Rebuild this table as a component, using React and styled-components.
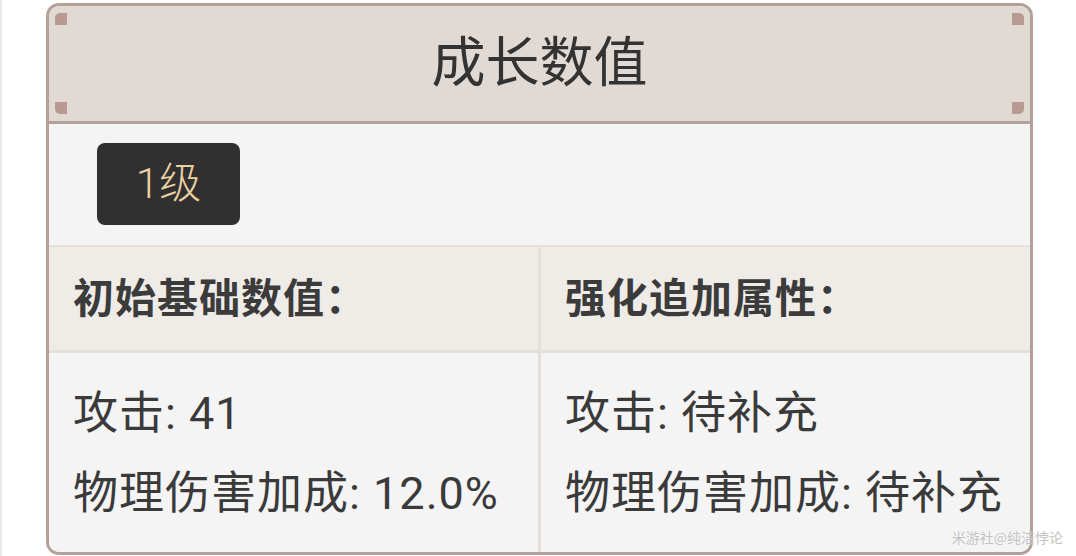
import React from "react";
import styled, { createGlobalStyle } from "styled-components";

const GlobalStyle = createGlobalStyle`
    html, body {
        margin: 0;
        padding: 0;
        background: #ffffff;
    }
    body {
        font-family: "Noto Sans CJK SC", "Noto Sans", sans-serif;
        border-left: 2px solid #e9e9e9;
    }
`;

const stats = {
    base: [
        ["攻击", "41"],
        ["物理伤害加成", "12.0%"],
    ],
    extra: [
        ["攻击", "待补充"],
        ["物理伤害加成", "待补充"],
    ],
};

const App = () => {
    return (
        <Page>
            <GlobalStyle />
            <Card>
                <TitleBar>
                    <Corner $v="top" $h="left" />
                    <Corner $v="top" $h="right" />
                    <Corner $v="bottom" $h="left" />
                    <Corner $v="bottom" $h="right" />
                    <Title>成长数值</Title>
                </TitleBar>
                <LevelRow>
                    <LevelBadge>1级</LevelBadge>
                </LevelRow>
                <Table>
                    <HeadCell>初始基础数值：</HeadCell>
                    <HeadCell>强化追加属性：</HeadCell>
                    <BodyCell>
                        {stats.base.map(([k, v]) => (
                            <StatLine key={k}>{k}: {v}</StatLine>
                        ))}
                    </BodyCell>
                    <BodyCell>
                        {stats.extra.map(([k, v]) => (
                            <StatLine key={k}>{k}: {v}</StatLine>
                        ))}
                    </BodyCell>
                </Table>
            </Card>
            <Watermark>米游社@纯洁悖论</Watermark>
        </Page>
    );
};

export default App;

const Page = styled.div`
    position: relative;
    width: 1074px;
    height: 556px;
    padding: 3px 0 0 44px;
    box-sizing: border-box;
`;

const Card = styled.div`
    width: 987px;
    height: 552px;
    box-sizing: border-box;
    border: 3px solid #b4a098;
    border-radius: 13px;
    overflow: hidden;
    background: #f4f4f4;
    display: flex;
    flex-direction: column;
`;

const TitleBar = styled.div`
    position: relative;
    height: 115px;
    flex-shrink: 0;
    box-sizing: content-box;
    background: #e1d9d3;
    border-bottom: 3px solid #b4a098;
    display: flex;
    align-items: center;
    justify-content: center;
`;

const Corner = styled.span`
    position: absolute;
    width: 12px;
    height: 12px;
    background: #b99a90;
    ${(p) => p.$v}: 7px;
    ${(p) => p.$h}: 6px;
    border-${(p) => p.$v}-${(p) => p.$h}-radius: 5px;
`;

const Title = styled.h1`
    margin: 0 0 10px;
    font-size: 54px;
    font-weight: 400;
    color: #333333;
    line-height: 1;
`;

const LevelRow = styled.div`
    height: 121px;
    flex-shrink: 0;
    box-sizing: border-box;
    padding: 19px 48px 0;
    display: flex;
    align-items: flex-start;
`;

const LevelBadge = styled.div`
    width: 143px;
    height: 82px;
    box-sizing: border-box;
    padding-bottom: 10px;
    border-radius: 8px;
    background: #303030;
    color: #ebd1a2;
    font-family: Roboto, "Noto Sans CJK SC", sans-serif;
    font-size: 42px;
    font-weight: 300;
    display: flex;
    align-items: center;
    justify-content: center;
`;

const Table = styled.div`
    flex: 1;
    display: grid;
    grid-template-columns: 1fr 1fr;
    grid-template-rows: 103px 1fr;
    gap: 3px;
    padding-top: 2px;
    background: #e5e0db;
`;

const HeadCell = styled.div`
    background: #efebe7;
    display: flex;
    align-items: center;
    padding: 0 0 8px 24px;
    font-size: 41px;
    font-weight: 700;
    letter-spacing: 1px;
    color: #3b3b3b;
`;

const BodyCell = styled.div`
    background: #f4f4f4;
    padding: 21px 0 0 24px;
    display: flex;
    flex-direction: column;
`;

const StatLine = styled.div`
    font-family: Roboto, "Noto Sans CJK SC", sans-serif;
    font-size: 45px;
    letter-spacing: 1px;
    line-height: 80px;
    color: #3a3a3a;
    white-space: nowrap;
`;

const Watermark = styled.div`
    position: absolute;
    right: 13px;
    bottom: 9px;
    font-size: 14px;
    color: #c2c2c2;
    text-shadow: 0 0 1px #ffffff;
`;
